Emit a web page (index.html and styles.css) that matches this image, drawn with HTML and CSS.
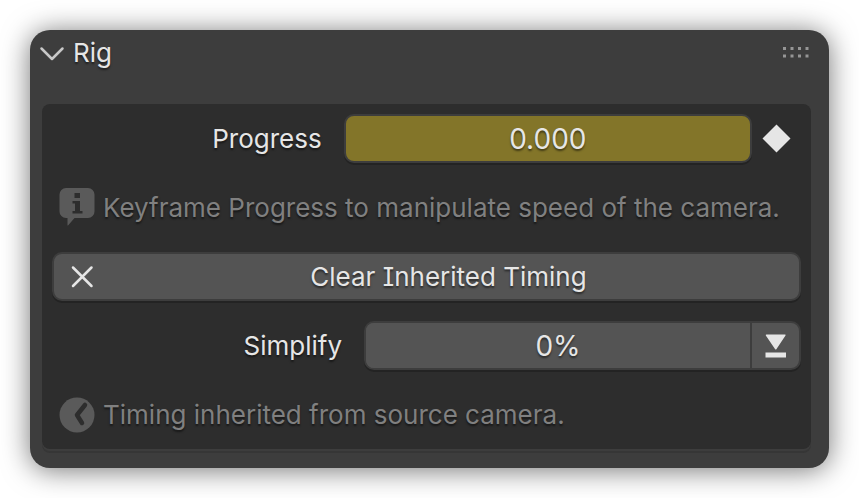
FILE: index.html
```html
<!DOCTYPE html>
<html lang="en">
<head>
  <meta charset="UTF-8" />
  <meta name="viewport" content="width=device-width, initial-scale=1.0"/>
  <title>Rig</title>
  <link rel="stylesheet" href="styles.css">
</head>
<body>
  <section class="panel">
    <header class="panel-header">
      <button class="collapse-btn" type="button">
        <svg class="chevron" width="26" height="16" viewBox="0 0 26 16" aria-hidden="true">
          <path d="M2.500 3.500 13 14 23.500 3.500"/>
        </svg>
        <span>Rig</span>
      </button>
      <svg class="grip" width="28" height="12" viewBox="0 0 28 12" aria-hidden="true">
        <path d="M0 0h3v3h-3z M7.500 0h3v3h-3z M15 0h3v3h-3z M22.500 0h3v3h-3z M0 7.500h3v3h-3z M7.500 7.500h3v3h-3z M15 7.500h3v3h-3z M22.500 7.500h3v3h-3z"/>
      </svg>
    </header>

    <div class="box">
      <div class="row keyed">
        <label for="progress">Progress</label>
        <input class="field animated" id="progress" type="text" value="0.000">
        <button class="key-btn" type="button" aria-label="Insert keyframe">
          <svg width="30" height="30" viewBox="0 0 30 30"><path d="M15.500 .500 29.500 14.500 15.500 28.500 1.500 14.500z"/></svg>
        </button>
      </div>

      <div class="row note">
        <svg width="36" height="40" viewBox="0 0 36 40" aria-hidden="true">
          <path fill="#5a5a5a" d="M7 0h22a6.500 6.500 0 0 1 6.500 6.500v17a6.500 6.500 0 0 1-6.500 6.500H15.500L9 37.500H8.500V30H7A6.500 6.500 0 0 1 .500 23.500v-17A6.500 6.500 0 0 1 7 0z"/>
          <path fill="#2d2d2d" d="M15.500 5h5.500v5h-5.500z M13.500 13H21V23h2.500v2.500h-10V23H16v-7.500h-2.500z"/>
        </svg>
        <span>Keyframe Progress to manipulate speed of the camera.</span>
      </div>

      <button class="row clear-btn" type="button">
        <svg width="24" height="24" viewBox="0 0 24 24" aria-hidden="true">
          <path d="M3 2.500 21.500 21M21.500 2.500 3 21"/>
        </svg>
        <span>Clear Inherited Timing</span>
      </button>

      <div class="row">
        <label for="simplify">Simplify</label>
        <div class="joined">
          <input class="field" id="simplify" type="text" value="0%">
          <button class="apply-btn" type="button" aria-label="Apply">
            <svg width="22" height="24" viewBox="0 0 22 24">
              <path d="M1.500 .500h18.500q1 0 .500 1L11.500 15q-.750 1-1.500 0L.800 1.500q-.300-1 .700-1z M.500 18.500h20.500v5H.500z"/>
            </svg>
          </button>
        </div>
      </div>

      <div class="row note">
        <svg width="36" height="40" viewBox="0 0 36 40" aria-hidden="true">
          <circle cx="18" cy="20" r="17.500" fill="#5a5a5a"/>
          <path fill="none" stroke="#2d2d2d" stroke-width="4.500" stroke-linecap="round" stroke-linejoin="round" d="M26 10 18 20l5 8"/>
        </svg>
        <span>Timing inherited from source camera.</span>
      </div>
    </div>
  </section>
</body>
</html>
```
FILE: styles.css
```css
* {
  box-sizing: border-box;
}

body {
  margin: 0;
  padding: 30px;
  background-color: #fff;
  color: #e6e6e6;
  font-family: Inter, "Liberation Sans", sans-serif;
  font-size: 26px;
  line-height: 34px;
  font-feature-settings: "cv08";
}

button,
input {
  margin: 0;
  padding: 0;
  border: none;
  background: none;
  color: inherit;
  font: inherit;
  font-feature-settings: inherit;
  text-shadow: inherit;
}

button {
  cursor: pointer;
}

svg {
  display: block;
  flex: none;
}

.panel {
  padding: 0 18px 19px 12px;
  border-radius: 20px;
  background-color: #3d3d3d;
  box-shadow: 0 2px 28px rgba(0, 0, 0, 0.55);
  text-shadow: 0 2px 2px rgba(0, 0, 0, 0.5);
}

.panel-header {
  display: flex;
  justify-content: space-between;
  align-items: center;
  height: 46px;
  margin-bottom: 28px;
}

.collapse-btn {
  display: flex;
  align-items: center;
  gap: 8px;
  margin-left: -3px;
}

.chevron {
  fill: none;
  stroke: #c8c8c8;
  stroke-width: 2.5;
  stroke-linecap: round;
  stroke-linejoin: round;
}

.grip {
  fill: #969696;
}

.box {
  display: flex;
  flex-direction: column;
  gap: 20px;
  padding: 10px;
  border-radius: 8px;
  background-color: #2d2d2d;
  box-shadow: 0 2px 0 #3d3d3d, 0 4px 0 #363636;
}

.row {
  display: grid;
  grid-template-columns: minmax(0, 5fr) minmax(0, 7fr);
  align-items: center;
  height: 49px;
}

.row.keyed {
  grid-template-columns: minmax(0, 5fr) minmax(0, 7fr) 49px;
}

.row label {
  padding-right: 22px;
  text-align: right;
}

.field,
.clear-btn,
.joined {
  width: 100%;
  height: 49px;
  border: 2px solid #3d3d3d;
  border-radius: 10px;
  background-color: #545454;
  box-shadow: 0 2px 0 #232323;
}

.field {
  font-size: 28px;
  text-align: center;
}

.field.animated {
  background-color: #837529;
}

.key-btn {
  display: flex;
  justify-content: center;
  fill: #e6e6e6;
}

.row.note {
  display: flex;
  gap: 8px;
  padding-left: 7px;
  color: #808080;
}

.row.clear-btn {
  display: flex;
  padding: 0 16px;
}

.clear-btn svg {
  fill: none;
  stroke: #e6e6e6;
  stroke-width: 2.5;
  stroke-linecap: round;
}

.clear-btn span {
  flex: 1;
  padding-left: 20px;
}

.joined {
  display: flex;
}

.joined .field {
  flex: 1;
  min-width: 0;
  height: auto;
  border: none;
  border-radius: 8px 0 0 8px;
  box-shadow: none;
}

.apply-btn {
  display: flex;
  flex: 0 0 49px;
  justify-content: center;
  align-items: center;
  border-left: 2px solid #3d3d3d;
  fill: #e6e6e6;
}
```
